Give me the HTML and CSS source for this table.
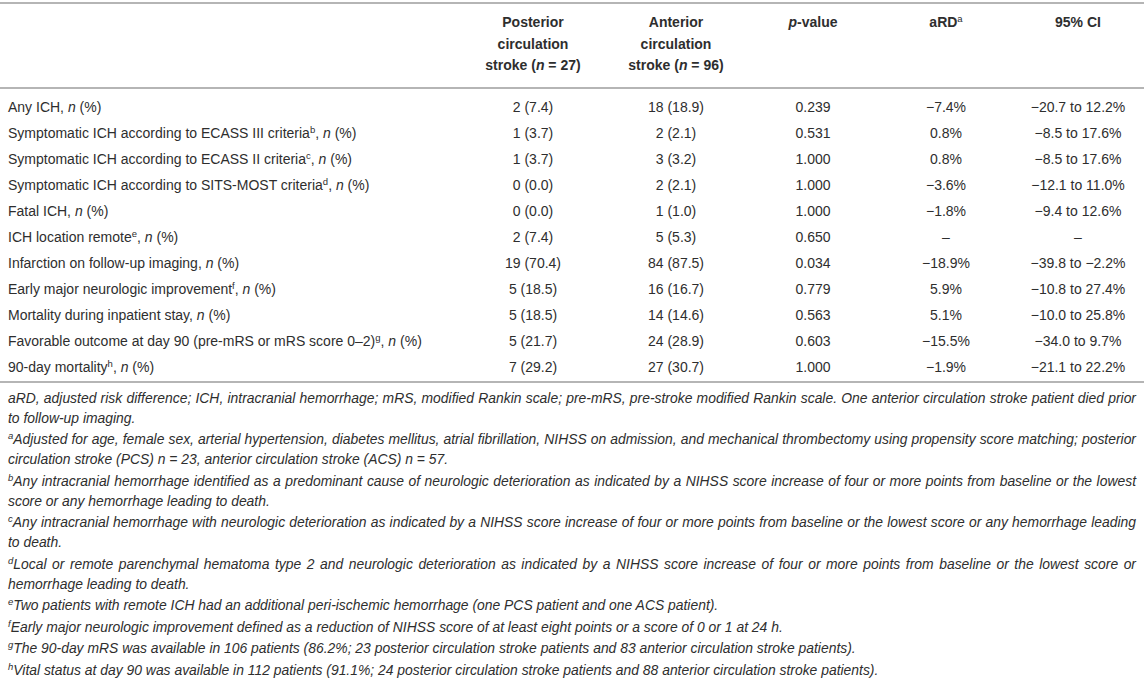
FILE: index.html
```html
<!DOCTYPE html>
<html lang="en">
<head>
<meta charset="utf-8">
<title>Table</title>
<link rel="stylesheet" href="styles.css">
</head>
<body>
<div class="page">
<table class="tbl">
  <colgroup>
    <col class="w-lab">
    <col class="w-c1">
    <col class="w-c2">
    <col class="w-c3">
    <col class="w-c4">
    <col class="w-c5">
  </colgroup>
  <thead>
    <tr>
      <th class="lab"></th>
      <th class="grp g1">Posterior circulation stroke (<i>n</i> = 27)</th>
      <th class="grp g2">Anterior circulation stroke (<i>n</i> = 96)</th>
      <th><i>p</i>-value</th>
      <th>aRD<sup>a</sup></th>
      <th>95% CI</th>
    </tr>
  </thead>
  <tbody>
    <tr><td class="lab">Any ICH, <i>n</i> (%)</td><td>2 (7.4)</td><td>18 (18.9)</td><td>0.239</td><td>−7.4%</td><td>−20.7 to 12.2%</td></tr>
    <tr><td class="lab">Symptomatic ICH according to ECASS III criteria<sup>b</sup>, <i>n</i> (%)</td><td>1 (3.7)</td><td>2 (2.1)</td><td>0.531</td><td>0.8%</td><td>−8.5 to 17.6%</td></tr>
    <tr><td class="lab">Symptomatic ICH according to ECASS II criteria<sup>c</sup>, <i>n</i> (%)</td><td>1 (3.7)</td><td>3 (3.2)</td><td>1.000</td><td>0.8%</td><td>−8.5 to 17.6%</td></tr>
    <tr><td class="lab">Symptomatic ICH according to SITS-MOST criteria<sup>d</sup>, <i>n</i> (%)</td><td>0 (0.0)</td><td>2 (2.1)</td><td>1.000</td><td>−3.6%</td><td>−12.1 to 11.0%</td></tr>
    <tr><td class="lab">Fatal ICH, <i>n</i> (%)</td><td>0 (0.0)</td><td>1 (1.0)</td><td>1.000</td><td>−1.8%</td><td>−9.4 to 12.6%</td></tr>
    <tr><td class="lab">ICH location remote<sup>e</sup>, <i>n</i> (%)</td><td>2 (7.4)</td><td>5 (5.3)</td><td>0.650</td><td>–</td><td>–</td></tr>
    <tr><td class="lab">Infarction on follow-up imaging, <i>n</i> (%)</td><td>19 (70.4)</td><td>84 (87.5)</td><td>0.034</td><td>−18.9%</td><td>−39.8 to −2.2%</td></tr>
    <tr><td class="lab">Early major neurologic improvement<sup>f</sup>, <i>n</i> (%)</td><td>5 (18.5)</td><td>16 (16.7)</td><td>0.779</td><td>5.9%</td><td>−10.8 to 27.4%</td></tr>
    <tr><td class="lab">Mortality during inpatient stay, <i>n</i> (%)</td><td>5 (18.5)</td><td>14 (14.6)</td><td>0.563</td><td>5.1%</td><td>−10.0 to 25.8%</td></tr>
    <tr><td class="lab">Favorable outcome at day 90 (pre-mRS or mRS score 0–2)<sup>g</sup>, <i>n</i> (%)</td><td>5 (21.7)</td><td>24 (28.9)</td><td>0.603</td><td>−15.5%</td><td>−34.0 to 9.7%</td></tr>
    <tr><td class="lab">90-day mortality<sup>h</sup>, <i>n</i> (%)</td><td>7 (29.2)</td><td>27 (30.7)</td><td>1.000</td><td>−1.9%</td><td>−21.1 to 22.2%</td></tr>
  </tbody>
</table>
<div class="notes">
  <p>aRD, adjusted risk difference; ICH, intracranial hemorrhage; mRS, modified Rankin scale; pre-mRS, pre-stroke modified Rankin scale. One anterior circulation stroke patient died prior to follow-up imaging.</p>
  <p><sup>a</sup>Adjusted for age, female sex, arterial hypertension, diabetes mellitus, atrial fibrillation, NIHSS on admission, and mechanical thrombectomy using propensity score matching; posterior circulation stroke (PCS) n = 23, anterior circulation stroke (ACS) n = 57.</p>
  <p><sup>b</sup>Any intracranial hemorrhage identified as a predominant cause of neurologic deterioration as indicated by a NIHSS score increase of four or more points from baseline or the lowest score or any hemorrhage leading to death.</p>
  <p><sup>c</sup>Any intracranial hemorrhage with neurologic deterioration as indicated by a NIHSS score increase of four or more points from baseline or the lowest score or any hemorrhage leading to death.</p>
  <p><sup>d</sup>Local or remote parenchymal hematoma type 2 and neurologic deterioration as indicated by a NIHSS score increase of four or more points from baseline or the lowest score or hemorrhage leading to death.</p>
  <p><sup>e</sup>Two patients with remote ICH had an additional peri-ischemic hemorrhage (one PCS patient and one ACS patient).</p>
  <p><sup>f</sup>Early major neurologic improvement defined as a reduction of NIHSS score of at least eight points or a score of 0 or 1 at 24 h.</p>
  <p><sup>g</sup>The 90-day mRS was available in 106 patients (86.2%; 23 posterior circulation stroke patients and 83 anterior circulation stroke patients).</p>
  <p><sup>h</sup>Vital status at day 90 was available in 112 patients (91.1%; 24 posterior circulation stroke patients and 88 anterior circulation stroke patients).</p>
</div>
</div>
</body>
</html>
```

FILE: styles.css
```css
html, body {
  margin: 0;
  padding: 0;
  background: #ffffff;
}
body {
  font-family: "Liberation Sans", Arial, sans-serif;
  color: #2e2e2e;
}
.page {
  width: 1144px;
  padding-top: 2px;
}
.tbl {
  width: 1144px;
  border-collapse: collapse;
  font-size: 14px;
  table-layout: fixed;
}
.w-lab { width: 460px; }
.w-c1 { width: 146px; }
.w-c2 { width: 140px; }
.w-c3 { width: 134px; }
.w-c4 { width: 132px; }
.w-c5 { width: 132px; }
.tbl th {
  font-weight: bold;
  text-align: center;
  vertical-align: top;
  line-height: 21.5px;
  padding: 8px 6px 10px;
  border-top: 2px solid #b5b5b5;
  border-bottom: 2px solid #b5b5b5;
}
.tbl th.g1 { padding-left: 15px; padding-right: 15px; }
.tbl th.g2 { padding-left: 12px; padding-right: 12px; }
.tbl th sup { font-weight: normal; }
.tbl td {
  text-align: center;
  line-height: 20px;
  padding: 3px 6px;
  white-space: nowrap;
}
.tbl td.lab {
  text-align: left;
  padding-left: 8px;
}
.tbl tbody tr:first-child td { padding-top: 8px; }
.tbl tbody tr:last-child td {
  padding-bottom: 4px;
  border-bottom: 2px solid #b5b5b5;
}
sup {
  font-size: 9.5px;
  line-height: 0;
  vertical-align: 5px;
}
.notes {
  padding: 5px 8px 0;
  font-size: 13.9px;
  font-style: italic;
  line-height: 20px;
  text-align: justify;
}
.notes p {
  margin: 0 0 1.5px;
}
```
